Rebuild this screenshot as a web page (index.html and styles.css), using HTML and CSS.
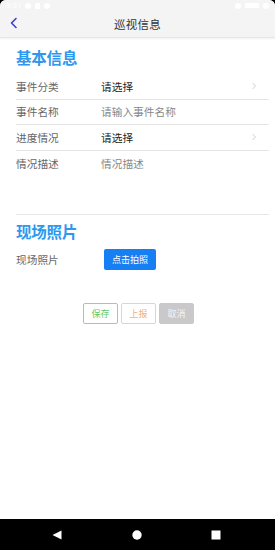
FILE: index.html
```html
<!DOCTYPE html>
<html lang="zh">
<head>
<meta charset="utf-8">
<link rel="stylesheet" href="styles.css">
</head>
<body>
<div class="screen">
  <div class="topbar">
    <div class="status">
      <div class="st-left"><span class="st-time">9:31</span><span class="st-dot"></span><span class="st-sq"></span><span class="st-dot"></span></div>
      <div class="st-right"><span class="st-dot"></span><span class="st-bar"></span><span class="st-dot"></span></div>
    </div>
    <div class="titlebar">
      <svg class="back" width="10" height="12" viewBox="0 0 10 12"><polyline points="7,1.5 2.5,6 7,10.5" fill="none" stroke="#3b3fd0" stroke-width="1.6" stroke-linecap="round" stroke-linejoin="round"/></svg>
      <div class="title">巡视信息</div>
    </div>
  </div>
  <div class="content">
    <h2 class="sec-title first">基本信息</h2>
    <div class="row">
      <span class="label">事件分类</span><span class="value">请选择</span>
      <svg class="chev" width="6" height="8" viewBox="0 0 6 8"><polyline points="1.5,1 4.5,4 1.5,7" fill="none" stroke="#c8c8c8" stroke-width="0.9"/></svg>
    </div>
    <div class="row">
      <span class="label">事件名称</span><span class="placeholder">请输入事件名称</span>
    </div>
    <div class="row">
      <span class="label">进度情况</span><span class="value">请选择</span>
      <svg class="chev" width="6" height="8" viewBox="0 0 6 8"><polyline points="1.5,1 4.5,4 1.5,7" fill="none" stroke="#c8c8c8" stroke-width="0.9"/></svg>
    </div>
    <div class="row last">
      <span class="label">情况描述</span><span class="placeholder">情况描述</span>
    </div>
    <div class="divider"></div>
    <h2 class="sec-title">现场照片</h2>
    <div class="row photo">
      <span class="label">现场照片</span><button class="shoot">点击拍照</button>
    </div>
    <div class="actions">
      <button class="btn save">保存</button>
      <button class="btn report">上报</button>
      <button class="btn cancel">取消</button>
    </div>
  </div>
  <div class="navbar">
    <svg width="10" height="10" viewBox="0 0 10 10"><polygon points="9.5,0.5 9.5,9.5 0.5,5" fill="#fff"/></svg>
    <svg width="10" height="10" viewBox="0 0 10 10"><circle cx="5" cy="5" r="4.7" fill="#fff"/></svg>
    <svg width="10" height="10" viewBox="0 0 10 10"><rect x="0.5" y="0.5" width="9" height="9" fill="#fff"/></svg>
  </div>
</div>
</body>
</html>
```
FILE: styles.css
```css
* { box-sizing: border-box; }
html, body { margin: 0; padding: 0; }
body {
  width: 275px;
  height: 550px;
  background: #000;
  font-family: "Noto Sans CJK SC", "Noto Sans", sans-serif;
}
.screen {
  width: 275px;
  height: 550px;
  display: flex;
  flex-direction: column;
  background: #fff;
  border-radius: 6px 6px 0 0;
  overflow: hidden;
}
.topbar {
  height: 38px;
  background: #f4f4f4;
  border-bottom: 1px solid #e6e6e6;
  box-shadow: 0 1px 2px rgba(0,0,0,0.06);
  display: flex;
  flex-direction: column;
}
.status {
  height: 11px;
  display: flex;
  justify-content: space-between;
  align-items: center;
  padding: 0 6px 0 6px;
}
.st-left, .st-right { display: flex; align-items: center; gap: 4px; }
.st-time { font-size: 8px; color: #fff; line-height: 8px; font-family: "Roboto", sans-serif; }
.st-dot { width: 6px; height: 6px; border-radius: 50%; background: #fff; }
.st-sq { width: 5px; height: 6px; background: #fff; }
.st-bar { width: 14px; height: 5px; background: #fff; }
.titlebar {
  flex: 1;
  position: relative;
  display: flex;
  align-items: center;
  justify-content: center;
}
.back { position: absolute; left: 9px; top: 6px; }
.title {
  font-size: 11.5px;
  color: #333;
  letter-spacing: 0.3px;
}
.content {
  flex: 1;
  padding: 0 6px 0 16px;
}
.sec-title {
  margin: 0;
  font-size: 15.5px;
  font-weight: bold;
  color: #2e98ee;
  line-height: 18px;
  letter-spacing: -0.2px;
}
.sec-title.first { margin-top: 10px; margin-bottom: 8px; }
.row {
  height: 25.5px;
  display: flex;
  align-items: center;
  border-bottom: 1px solid #e5e5e5;
  font-size: 10.7px;
}
.row.last { border-bottom: none; }
.label { width: 85px; color: #666; }
.value { color: #1e1e1e; font-weight: normal; flex: 1; }
.placeholder { color: #888; flex: 1; }
.chev { margin-right: 12px; }
.divider {
  height: 1px;
  background: #e6e6e6;
  margin-top: 38px;
  margin-bottom: 7px;
}
.row.photo { border-bottom: none; height: 28px; margin-top: 5px; }
.shoot {
  margin-left: 3px;
  width: 52px;
  height: 21px;
  border: none;
  border-radius: 2px;
  background: #167ff4;
  color: #fff;
  font-family: inherit;
  font-size: 9px;
  padding: 0;
}
.actions {
  display: flex;
  gap: 2px;
  margin-top: 30px;
  padding-left: 67px;
}
.btn {
  width: 35px;
  height: 21px;
  padding: 0;
  border-radius: 2px;
  font-family: inherit;
  font-size: 9px;
  background: #fff;
}
.save { border: 1px solid #86dc91; color: #5ccb6b; }
.report { border: 1px solid #f6cfa5; color: #f0b27a; margin-left: 1px; }
.cancel { border: 1px solid #c9c9cc; background: #c9c9cc; color: #f4f4f4; margin-left: 1px; }
.navbar {
  height: 31px;
  background: #000;
  display: flex;
  align-items: center;
  justify-content: space-between;
  padding: 0 54px 0 52px;
}
```
